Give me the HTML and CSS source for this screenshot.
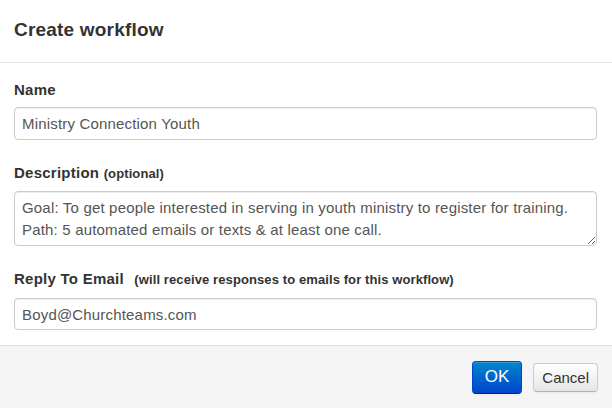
FILE: index.html
```html
<!DOCTYPE html>
<html>
<head>
    <title>Create workflow</title>
    <link rel="stylesheet" href="styles.css">
</head>
<body>
    <div class="modal">
        <div class="modal-header">
            <h3>Create workflow</h3>
        </div>
        <div class="modal-body">
            <div class="field">
                <label class="field-label">Name</label>
                <input class="text-input" type="text" value="Ministry Connection Youth">
            </div>
            <div class="field">
                <label class="field-label">Description <span class="hint">(optional)</span></label>
                <textarea class="text-input text-area">Goal: To get people interested in serving in youth ministry to register for training.
Path: 5 automated emails or texts &amp; at least one call.</textarea>
            </div>
            <div class="field">
                <label class="field-label field-label-spaced">Reply To Email <span class="hint hint-wide">(will receive responses to emails for this workflow)</span></label>
                <input class="text-input text-input-short" type="text" value="Boyd@Churchteams.com">
            </div>
        </div>
        <div class="modal-footer">
            <button class="btn btn-primary">OK</button>
            <button class="btn">Cancel</button>
        </div>
    </div>
</body>
</html>
```

FILE: styles.css
```css
body {
    margin: 0;
    font-family: "Liberation Sans", Arial, sans-serif;
    color: #333;
    background: #fff;
}

.modal {
    width: 612px;
    height: 408px;
    display: flex;
    flex-direction: column;
}

.modal-header {
    height: 63px;
    box-sizing: border-box;
    padding: 0 14px 2px;
    display: flex;
    align-items: center;
    border-bottom: 1px solid #e8e8e8;
}

.modal-header h3 {
    margin: 0;
    font-size: 19px;
    font-weight: bold;
    letter-spacing: 0.2px;
    color: #333;
}

.modal-body {
    padding: 18px 15px 0 14px;
    height: 282px;
    box-sizing: border-box;
}

.field {
    margin-bottom: 24px;
}

.field-label {
    display: block;
    font-size: 15px;
    font-weight: bold;
    letter-spacing: 0.25px;
    line-height: 18px;
    margin-bottom: 8px;
}

.field-label-spaced {
    margin-bottom: 9px;
}

.hint {
    font-size: 13px;
    letter-spacing: 0.1px;
}

.hint-wide {
    margin-left: 6px;
}

.text-input {
    display: block;
    width: 100%;
    box-sizing: border-box;
    height: 33px;
    margin: 0;
    padding: 4px 7px;
    font-family: "Liberation Sans", Arial, sans-serif;
    font-size: 15px;
    letter-spacing: 0.18px;
    color: #555;
    border: 1px solid #ccc;
    border-radius: 4px;
    box-shadow: inset 0 1px 1px rgba(0, 0, 0, 0.075);
    background: #fff;
}

.text-input-short {
    height: 32px;
}

.text-area {
    height: 55px;
    padding: 5px 7px;
    line-height: 22px;
    resize: vertical;
    overflow: hidden;
}

.modal-footer {
    flex: 1;
    background: #f5f5f5;
    border-top: 1px solid #ddd;
    display: flex;
    align-items: center;
    justify-content: flex-end;
    gap: 11px;
    padding: 0 14px 0 0;
}

.btn {
    font-family: "Liberation Sans", Arial, sans-serif;
    font-size: 15px;
    color: #333;
    height: 29px;
    padding: 0 8px;
    border: 1px solid #ccc;
    border-bottom-color: #b3b3b3;
    border-radius: 4px;
    background: linear-gradient(#fff, #e6e6e6);
    box-shadow: inset 0 1px 0 rgba(255, 255, 255, 0.2), 0 1px 2px rgba(0, 0, 0, 0.05);
}

.btn-primary {
    height: 33px;
    padding: 0 12px;
    font-size: 17px;
    color: #fff;
    border-color: #0044cc #0044cc #002a80;
    background: linear-gradient(#0088cc, #0044cc);
}
```
